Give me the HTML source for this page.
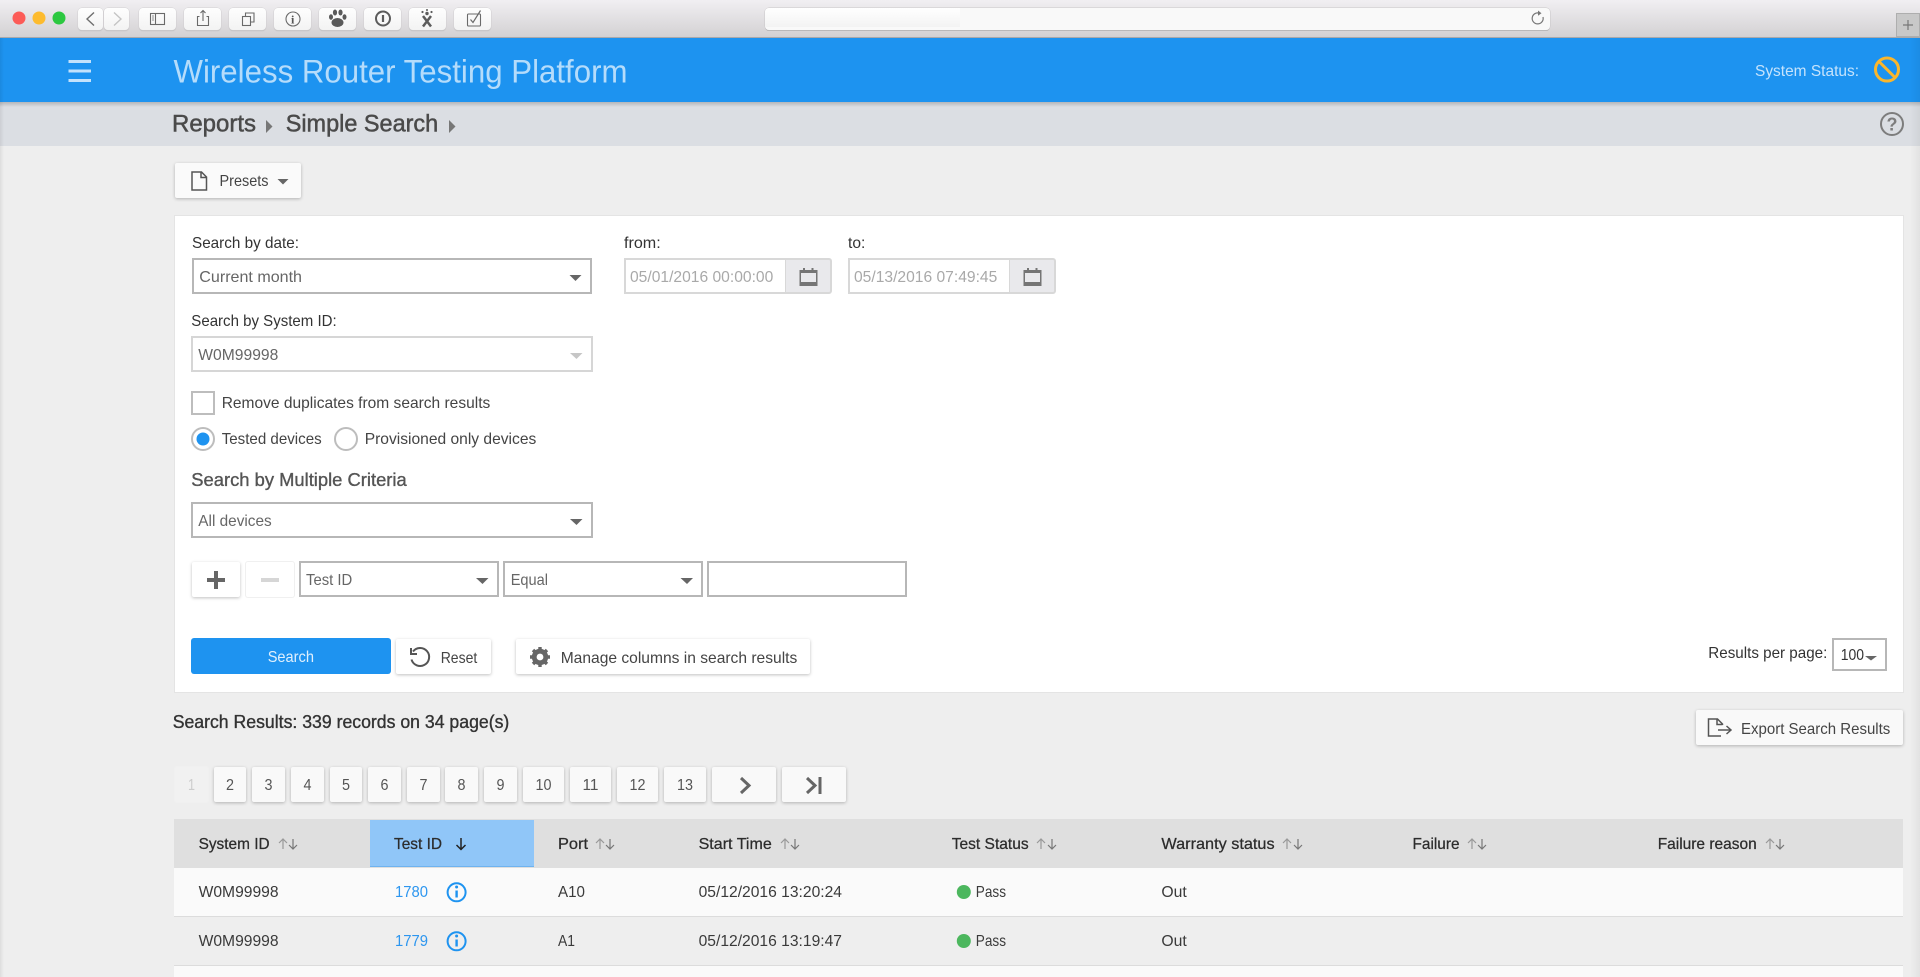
<!DOCTYPE html>
<html lang="en"><head><meta charset="utf-8"><title>Wireless Router Testing Platform</title>
<style>
html,body{margin:0;padding:0;width:1920px;height:977px;overflow:hidden;background:#eee}
body{position:relative;font-family:"Liberation Sans",sans-serif}
.b{position:absolute;box-sizing:border-box}
.tb{background:linear-gradient(#fefefe,#f3f3f3);border-radius:4px;box-shadow:0 0 0 .5px #d2d0d2,0 1px 1px #b8b6b8;top:8px;height:22px}
.btn{background:#fff;border-radius:2px;box-shadow:0 1px 3px rgba(0,0,0,.25)}
.off{background:#f8f8f8;border-radius:2px;box-shadow:0 0 0 1px #f0f0f0}
.sel{border:2px solid #b7b7b7;background:#fff}
.pg{background:#f9f9f9;border-radius:2px;box-shadow:0 1px 3px rgba(0,0,0,.25);top:767px;height:35px}
svg{position:absolute;left:0;top:0}
text{font-family:"Liberation Sans",sans-serif;font-size:16px;fill:#444;white-space:pre}
.sm{fill:#333}.v{fill:#666}
.h{fill:#2c2c2c;stroke:#2c2c2c;stroke-width:.25px}
.r{fill:#3a3a3a}
.p{fill:#555;text-anchor:middle}
</style></head><body>
<div class="b" style="left:0;top:0;width:1920px;height:38px;background:linear-gradient(#f1eff2,#d3d1d3);border-bottom:1px solid #aaa8aa"></div>
<div class="b tb" style="left:78px;width:25px"></div>
<div class="b tb" style="left:104px;width:25px"></div>
<div class="b tb" style="left:139px;width:37px"></div>
<div class="b tb" style="left:184px;width:37px"></div>
<div class="b tb" style="left:229px;width:37px"></div>
<div class="b tb" style="left:274px;width:37px"></div>
<div class="b tb" style="left:319px;width:37px"></div>
<div class="b tb" style="left:364px;width:37px"></div>
<div class="b tb" style="left:409px;width:37px"></div>
<div class="b tb" style="left:454px;width:37px"></div>
<div class="b" style="left:765px;top:8px;width:785px;height:22px;background:#f9f9f9;border-radius:4px;box-shadow:0 0 0 .5px #c8c6c8,0 1px 0 #aaa"></div>
<div class="b" style="left:765px;top:8px;width:195px;height:19px;background:linear-gradient(#fff,#f3f3f3);border-radius:4px 0 0 0"></div>
<div class="b" style="left:1896px;top:13px;width:24px;height:24px;background:#c8c8c8;border:1px solid #aeaeae"></div>
<div class="b" style="left:0;top:38px;width:1920px;height:64px;background:#1d93f0"></div>
<div class="b" style="left:0;top:102px;width:1920px;height:44px;background:#dbdee3"></div>
<div class="b" style="left:0;top:102px;width:1920px;height:5px;background:linear-gradient(rgba(0,0,0,.18),rgba(0,0,0,0))"></div>
<div class="b btn" style="left:175px;top:163px;width:126px;height:35px;background:#fafafa"></div>
<div class="b" style="left:174px;top:215px;width:1730px;height:478px;background:#fff;border:1px solid #e4e4e4"></div>
<div class="b sel" style="left:192px;top:258px;width:400px;height:36px"></div>
<div class="b sel" style="left:191px;top:336px;width:402px;height:36px;border-color:#d6d6d6"></div>
<div class="b" style="left:191px;top:391px;width:24px;height:24px;border:2px solid #bdbdbd;background:#fff"></div>
<div class="b sel" style="left:191px;top:502px;width:402px;height:36px"></div>
<div class="b" style="left:624px;top:258px;width:208px;height:36px;border:2px solid #d8d8d8;border-radius:0 3px 3px 0;background:#e9e9ec"></div>
<div class="b" style="left:626px;top:260px;width:160px;height:32px;background:#fff;border-right:1px solid #d8d8d8"></div>
<div class="b" style="left:848px;top:258px;width:208px;height:36px;border:2px solid #d8d8d8;border-radius:0 3px 3px 0;background:#e9e9ec"></div>
<div class="b" style="left:850px;top:260px;width:160px;height:32px;background:#fff;border-right:1px solid #d8d8d8"></div>
<div class="b btn" style="left:192px;top:562px;width:48px;height:35px"></div>
<div class="b off" style="left:246px;top:562px;width:48px;height:35px;background:#fff"></div>
<div class="b sel" style="left:299px;top:561px;width:200px;height:36px"></div>
<div class="b sel" style="left:503px;top:561px;width:200px;height:36px"></div>
<div class="b sel" style="left:707px;top:561px;width:200px;height:36px"></div>
<div class="b" style="left:191px;top:638px;width:200px;height:36px;background:#1e93f0;border-radius:3px"></div>
<div class="b btn" style="left:396px;top:639px;width:95px;height:35px"></div>
<div class="b btn" style="left:516px;top:639px;width:294px;height:35px"></div>
<div class="b sel" style="left:1832px;top:638px;width:55px;height:33px"></div>
<div class="b btn" style="left:1696px;top:710px;width:207px;height:35px;background:#f9f9f9"></div>
<div class="b off" style="left:175px;top:767px;width:33px;height:35px;background:#f1f1f1"></div>
<div class="b pg" style="left:214px;width:32px"></div>
<div class="b pg" style="left:252px;width:33px"></div>
<div class="b pg" style="left:291px;width:33px"></div>
<div class="b pg" style="left:330px;width:32px"></div>
<div class="b pg" style="left:368px;width:33px"></div>
<div class="b pg" style="left:407px;width:33px"></div>
<div class="b pg" style="left:445px;width:33px"></div>
<div class="b pg" style="left:484px;width:33px"></div>
<div class="b pg" style="left:523px;width:41px"></div>
<div class="b pg" style="left:570px;width:41px"></div>
<div class="b pg" style="left:617px;width:41px"></div>
<div class="b pg" style="left:664px;width:42px"></div>
<div class="b pg" style="left:712px;width:64px"></div>
<div class="b pg" style="left:782px;width:64px"></div>
<div class="b" style="left:174px;top:819px;width:1729px;height:49px;background:#dfdfdf"></div>
<div class="b" style="left:370px;top:820px;width:164px;height:47px;background:#90c6f8;border-bottom:1px solid #6fb3ef"></div>
<div class="b" style="left:174px;top:868px;width:1729px;height:49px;background:#fafafa;border-bottom:1px solid #dcdcdc"></div>
<div class="b" style="left:174px;top:917px;width:1729px;height:49px;background:#eee;border-bottom:1px solid #dcdcdc"></div>
<div class="b" style="left:174px;top:966px;width:1729px;height:11px;background:#fafafa"></div>
<div class="b" style="left:0;top:38px;width:4px;height:939px;background:linear-gradient(90deg,rgba(0,0,0,.07),rgba(0,0,0,0))"></div>
<div class="b" style="left:1910px;top:38px;width:10px;height:939px;background:linear-gradient(90deg,rgba(0,0,0,0),rgba(0,0,0,.05))"></div>

<svg width="1920" height="977" viewBox="0 0 1920 977" fill="none">
<!-- window chrome -->
<circle cx="19" cy="18" r="6.500" fill="#fc5b57"/><circle cx="39" cy="18" r="6.500" fill="#fdbb2e"/><circle cx="59" cy="18" r="6.500" fill="#2cc840"/>
<path d="M94 12.500l-7 6.500 7 6.500" stroke="#6e6e6e" stroke-width="1.400"/><path d="M114 12.500l7 6.500-7 6.500" stroke="#c4c4c4" stroke-width="1.400"/>
<g stroke="#6a6a6a" stroke-width="1.100">
<rect x="150.500" y="13.500" width="14" height="11"/><path d="M155.500 13.500v11"/><path d="M152 16h2M152 18h2M152 20h2" stroke-width=".8"/>
<path d="M199.500 16.500h-2v9h11v-9h-2M203 21v-10M200.500 13l2.500-2.500 2.500 2.500"/>
<rect x="242.500" y="16.500" width="8" height="9"/><path d="M245.500 16v-3h8.500v9h-3.500"/>
<circle cx="293" cy="19" r="7"/>
<rect x="467.500" y="14" width="13" height="12" rx="1"/>
</g>
<text x="291" y="23.500" style="font-family:'Liberation Serif',serif;font-size:12px;fill:#555;font-weight:bold">i</text>
<g fill="#5a5a5a"><ellipse cx="337.500" cy="22.500" rx="6" ry="4.500"/><ellipse cx="331" cy="17" rx="2" ry="2.800"/><ellipse cx="335" cy="12.500" rx="2.100" ry="3"/><ellipse cx="340.500" cy="12.500" rx="2.100" ry="3"/><ellipse cx="344.500" cy="17" rx="2" ry="2.800"/></g>
<circle cx="383" cy="18.500" r="7" stroke="#5c5c5c" stroke-width="2"/><path d="M383 15v7" stroke="#5c5c5c" stroke-width="2.200"/>
<path d="M423 16l8 10.500M431 16l-8 10.500" stroke="#5c5c5c" stroke-width="2.500"/><circle cx="427" cy="13.500" r="1.700" fill="#5c5c5c"/><circle cx="422.500" cy="12" r="1.100" fill="#5c5c5c"/><circle cx="431.500" cy="12" r="1.100" fill="#5c5c5c"/><circle cx="427" cy="10" r="1" fill="#5c5c5c"/>
<path d="M470.500 19.500l2.500 3 7.500-12" stroke="#6a6a6a" stroke-width="1.200"/>
<path d="M1543 17a5.500 5.500 0 1 1-3.500-3.800" stroke="#777" stroke-width="1.200"/><path d="M1538 10.500l3.500 2.700-3.500 2.500z" fill="#777"/>
<path d="M1903 25h10M1908 20v10" stroke="#777" stroke-width="1.200"/>
<!-- header -->
<path d="M68.500 61.500h22.500M68.500 71h22.500M68.500 80.500h22.500" stroke="#c3e2fc" stroke-width="3"/>
<text x="173.500" y="82.500" textLength="454" lengthAdjust="spacingAndGlyphs" style="font-size:32px;fill:#b5dcfb">Wireless Router Testing Platform</text>
<text x="1755" y="76" textLength="104" lengthAdjust="spacingAndGlyphs" style="fill:#c5e3fc">System Status:</text>
<circle cx="1887" cy="69.500" r="11.500" stroke="#fbb62b" stroke-width="3"/><path d="M1879 61.500l16 16" stroke="#fbb62b" stroke-width="3"/>
<!-- breadcrumb -->
<text x="172" y="131.500" textLength="84" lengthAdjust="spacingAndGlyphs" style="font-size:24px;fill:#4a4a4a;stroke:#4a4a4a;stroke-width:.5px">Reports</text>
<path d="M266 120l6.500 6.500-6.500 6.500z" fill="#777"/>
<text x="285.700" y="131.500" textLength="152.500" lengthAdjust="spacingAndGlyphs" style="font-size:24px;fill:#4a4a4a;stroke:#4a4a4a;stroke-width:.5px">Simple Search</text>
<path d="M449 120l6.500 6.500-6.500 6.500z" fill="#777"/>
<circle cx="1892" cy="124" r="11" stroke="#7d7d7d" stroke-width="2"/>
<text x="1886.500" y="130.500" style="font-size:18px;font-weight:bold;fill:#7d7d7d">?</text>
<!-- presets -->
<path d="M192 172h9.500l5 5v13h-14.500zM201 172v5.500h5.500" stroke="#555" stroke-width="1.500"/>
<text x="219.500" y="186" textLength="49" lengthAdjust="spacingAndGlyphs">Presets</text>
<path d="M277.500 179h11l-5.500 5.500z" fill="#666"/>
<!-- form -->
<text class="sm" x="192" y="248" textLength="107" lengthAdjust="spacingAndGlyphs">Search by date:</text>
<text class="v" x="199.300" y="282" textLength="102.700" lengthAdjust="spacingAndGlyphs">Current month</text>
<path d="M569.500 275h12l-6 6z" fill="#666"/>
<text class="sm" x="191.300" y="326" textLength="145.400" lengthAdjust="spacingAndGlyphs">Search by System ID:</text>
<text class="v" x="198.300" y="360" textLength="80" lengthAdjust="spacingAndGlyphs">W0M99998</text>
<path d="M570 353h12.500l-6 6z" fill="#c6c6c6"/>
<text x="221.700" y="408" textLength="268.600" lengthAdjust="spacingAndGlyphs">Remove duplicates from search results</text>
<circle cx="203" cy="439" r="11" fill="#fff" stroke="#bdbdbd" stroke-width="2"/><circle cx="203" cy="439" r="6.500" fill="#1e93f0"/>
<text x="221.700" y="444" textLength="100" lengthAdjust="spacingAndGlyphs">Tested devices</text>
<circle cx="346" cy="439" r="11" fill="#fff" stroke="#bdbdbd" stroke-width="2"/>
<text x="364.700" y="444" textLength="171.600" lengthAdjust="spacingAndGlyphs">Provisioned only devices</text>
<text x="191.300" y="486" textLength="215.400" lengthAdjust="spacingAndGlyphs" style="font-size:18px;fill:#555;stroke:#555;stroke-width:.35px">Search by Multiple Criteria</text>
<text class="v" x="198.300" y="526" textLength="73.400" lengthAdjust="spacingAndGlyphs">All devices</text>
<path d="M570 519h12.500l-6 6z" fill="#666"/>
<text class="sm" x="624" y="248" textLength="36.700" lengthAdjust="spacingAndGlyphs">from:</text>
<text class="sm" x="848" y="248" textLength="17.300" lengthAdjust="spacingAndGlyphs">to:</text>
<text x="630" y="282" textLength="143.300" lengthAdjust="spacingAndGlyphs" style="fill:#a9a9a9">05/01/2016 00:00:00</text>
<text x="854" y="282" textLength="143.300" lengthAdjust="spacingAndGlyphs" style="fill:#a9a9a9">05/13/2016 07:49:45</text>
<g fill="#757575"><path d="M799.500 270h18v16h-18zM801 273v11.500h15v-11.500z" fill-rule="evenodd"/><path d="M803 268h2v4h-2zM811.500 268h2v4h-2zM799.500 282h18v4h-18z"/>
<path d="M1023.500 270h18v16h-18zM1025 273v11.500h15v-11.500z" fill-rule="evenodd"/><path d="M1027 268h2v4h-2zM1035.500 268h2v4h-2zM1023.500 282h18v4h-18z"/></g>
<!-- criteria row -->
<path d="M207 580h18M216 571v18" stroke="#666" stroke-width="4"/>
<path d="M261 580h18" stroke="#d6d6d6" stroke-width="4"/>
<text class="v" x="306" y="585" textLength="46.300" lengthAdjust="spacingAndGlyphs">Test ID</text>
<path d="M476 578h12.500l-6 6z" fill="#666"/>
<text class="v" x="510.700" y="585" textLength="37.300" lengthAdjust="spacingAndGlyphs">Equal</text>
<path d="M680.500 578h12.500l-6 6z" fill="#666"/>
<!-- buttons -->
<path d="M413 651.500a9 9 0 1 1-1.500 8" stroke="#555" stroke-width="2"/><path d="M411 648v6h6" stroke="#555" stroke-width="2"/>
<text x="267.700" y="662" textLength="46.300" lengthAdjust="spacingAndGlyphs" style="fill:#e0f0fd">Search</text>
<text x="440.700" y="663" textLength="36.600" lengthAdjust="spacingAndGlyphs">Reset</text>
<circle cx="540" cy="657" r="6.200" stroke="#666" stroke-width="4"/>
<path d="M540 647v20M530 657h20M533 650l14 14M547 650l-14 14" stroke="#666" stroke-width="3.400"/><circle cx="540" cy="657" r="3.400" fill="#fff"/>
<text x="560.700" y="663" textLength="236.600" lengthAdjust="spacingAndGlyphs">Manage columns in search results</text>
<text x="1708.300" y="658" textLength="119" lengthAdjust="spacingAndGlyphs" class="sm">Results per page:</text>
<text x="1840.700" y="660" textLength="23.300" lengthAdjust="spacingAndGlyphs" class="sm">100</text>
<path d="M1865 656h12l-6 4.500z" fill="#666"/>
<text x="172.700" y="728" textLength="336.600" lengthAdjust="spacingAndGlyphs" style="font-size:18px;fill:#333;stroke:#333;stroke-width:.35px">Search Results: 339 records on 34 page(s)</text>
<path d="M1721 736h-12.500v-17h9l5 5v1M1717 719v5.500h5.500M1718 730h12.500M1726.500 726l4.500 4-4.500 4" stroke="#555" stroke-width="1.500"/>
<text x="1741" y="734" textLength="149.300" lengthAdjust="spacingAndGlyphs">Export Search Results</text>
<!-- pagination -->
<text x="191.500" y="790" class="p" style="fill:#ccc" textLength="7" lengthAdjust="spacingAndGlyphs">1</text>
<text x="230" y="790" class="p" textLength="8" lengthAdjust="spacingAndGlyphs">2</text><text x="268.500" y="790" class="p" textLength="8" lengthAdjust="spacingAndGlyphs">3</text><text x="307.500" y="790" class="p" textLength="8" lengthAdjust="spacingAndGlyphs">4</text><text x="346" y="790" class="p" textLength="8" lengthAdjust="spacingAndGlyphs">5</text><text x="384.500" y="790" class="p" textLength="8" lengthAdjust="spacingAndGlyphs">6</text><text x="423.500" y="790" class="p" textLength="8" lengthAdjust="spacingAndGlyphs">7</text><text x="461.500" y="790" class="p" textLength="8" lengthAdjust="spacingAndGlyphs">8</text><text x="500.500" y="790" class="p" textLength="8" lengthAdjust="spacingAndGlyphs">9</text><text x="543.500" y="790" class="p" textLength="16" lengthAdjust="spacingAndGlyphs">10</text><text x="590.500" y="790" class="p" textLength="16" lengthAdjust="spacingAndGlyphs">11</text><text x="637.500" y="790" class="p" textLength="16" lengthAdjust="spacingAndGlyphs">12</text><text x="685" y="790" class="p" textLength="16" lengthAdjust="spacingAndGlyphs">13</text>
<path d="M741 778l8 7.500-8 7.500" stroke="#666" stroke-width="3"/>
<path d="M807 778l8 7.500-8 7.500M820 777v17" stroke="#666" stroke-width="3"/>
<!-- table head -->
<text class="h" x="198.600" y="849" textLength="71" lengthAdjust="spacingAndGlyphs">System ID</text>
<text class="h" x="394" y="849" textLength="48" lengthAdjust="spacingAndGlyphs">Test ID</text>
<text class="h" x="558" y="849" textLength="30" lengthAdjust="spacingAndGlyphs">Port</text>
<text class="h" x="698.600" y="849" textLength="73.200" lengthAdjust="spacingAndGlyphs">Start Time</text>
<text class="h" x="951.700" y="849" textLength="77" lengthAdjust="spacingAndGlyphs">Test Status</text>
<text class="h" x="1161.400" y="849" textLength="113.200" lengthAdjust="spacingAndGlyphs">Warranty status</text>
<text class="h" x="1412.500" y="849" textLength="47" lengthAdjust="spacingAndGlyphs">Failure</text>
<text class="h" x="1657.700" y="849" textLength="99" lengthAdjust="spacingAndGlyphs">Failure reason</text>
<path d="M461 838v11M456.500 845l4.500 4.500 4.500-4.500" stroke="#222" stroke-width="1.500"/>
<g stroke-width="1.200">
<g stroke="#999"><path d="M283 849v-10M279 843l4-4 4 4M600 849v-10M596 843l4-4 4 4M785 849v-10M781 843l4-4 4 4M1041 849v-10M1037 843l4-4 4 4M1287 849v-10M1283 843l4-4 4 4M1472 849v-10M1468 843l4-4 4 4M1770 849v-10M1766 843l4-4 4 4"/></g>
<g stroke="#777"><path d="M293 839v10M289 845l4 4 4-4M610 839v10M606 845l4 4 4-4M795 839v10M791 845l4 4 4-4M1052 839v10M1048 845l4 4 4-4M1298 839v10M1294 845l4 4 4-4M1482 839v10M1478 845l4 4 4-4M1780 839v10M1776 845l4 4 4-4"/></g>
</g>
<!-- rows -->
<text class="r" x="198.600" y="897" textLength="80" lengthAdjust="spacingAndGlyphs">W0M99998</text>
<text x="395" y="897" textLength="33" lengthAdjust="spacingAndGlyphs" style="fill:#2d96ef">1780</text>
<circle cx="456.600" cy="892.300" r="9" stroke="#1e93f0" stroke-width="2"/><path d="M456.600 890.500v7" stroke="#1e93f0" stroke-width="2.400"/><circle cx="456.600" cy="887" r="1.500" fill="#1e93f0"/>
<text class="r" x="558" y="897" textLength="27" lengthAdjust="spacingAndGlyphs">A10</text>
<text class="r" x="698.600" y="897" textLength="143.400" lengthAdjust="spacingAndGlyphs">05/12/2016 13:20:24</text>
<circle cx="963.800" cy="892" r="7" fill="#4cb75e"/>
<text class="r" x="975.800" y="897" textLength="30.200" lengthAdjust="spacingAndGlyphs">Pass</text>
<text class="r" x="1161.400" y="897" textLength="25.400" lengthAdjust="spacingAndGlyphs">Out</text>
<text class="r" x="198.600" y="946" textLength="80" lengthAdjust="spacingAndGlyphs">W0M99998</text>
<text x="395" y="946" textLength="33" lengthAdjust="spacingAndGlyphs" style="fill:#2d96ef">1779</text>
<circle cx="456.600" cy="941.300" r="9" stroke="#1e93f0" stroke-width="2"/><path d="M456.600 939.500v7" stroke="#1e93f0" stroke-width="2.400"/><circle cx="456.600" cy="936" r="1.500" fill="#1e93f0"/>
<text class="r" x="558" y="946" textLength="17" lengthAdjust="spacingAndGlyphs">A1</text>
<text class="r" x="698.600" y="946" textLength="143.400" lengthAdjust="spacingAndGlyphs">05/12/2016 13:19:47</text>
<circle cx="963.800" cy="941" r="7" fill="#4cb75e"/>
<text class="r" x="975.800" y="946" textLength="30.200" lengthAdjust="spacingAndGlyphs">Pass</text>
<text class="r" x="1161.400" y="946" textLength="25.400" lengthAdjust="spacingAndGlyphs">Out</text>
</svg>
</body></html>
